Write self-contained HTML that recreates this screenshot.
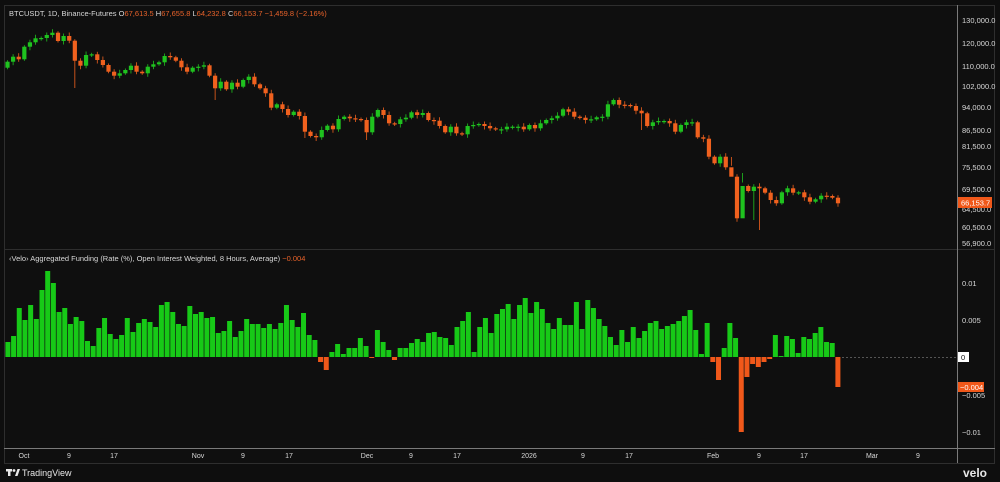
<!DOCTYPE html>
<html><head><meta charset="utf-8">
<style>
html,body{margin:0;padding:0;background:#0e0e0e;}
body{width:1000px;height:482px;overflow:hidden;position:relative;font-family:"Liberation Sans",sans-serif;}
svg{position:absolute;left:0;top:0;}
</style></head><body>
<svg id="s" width="1000" height="482" xmlns="http://www.w3.org/2000/svg">
<rect width="1000" height="482" fill="#0e0e0e"/>
<rect x="4.5" y="5.5" width="990" height="458" fill="#0f0f0f" stroke="#2e2e2e"/>
<line x1="4" y1="249.5" x2="995" y2="249.5" stroke="#2e2e2e"/>
<line x1="957.5" y1="5" x2="957.5" y2="463" stroke="#7a7a7a"/>
<line x1="4" y1="448.5" x2="995" y2="448.5" stroke="#7a7a7a"/>
<line x1="838" y1="357.5" x2="957" y2="357.5" stroke="#555" stroke-dasharray="2,2"/>
<g id="candles"></g>
<g id="fund"></g>
<text x="9" y="16" font-size="7.5" fill="#d8d8d8">BTCUSDT, 1D, Binance-Futures <tspan fill="#d8d8d8">O</tspan><tspan fill="#e8622a">67,613.5</tspan> <tspan fill="#d8d8d8">H</tspan><tspan fill="#e8622a">67,655.8</tspan> <tspan fill="#d8d8d8">L</tspan><tspan fill="#e8622a">64,232.8</tspan> <tspan fill="#d8d8d8">C</tspan><tspan fill="#e8622a">66,153.7  −1,459.8 (−2.16%)</tspan></text>
<text x="9" y="261" font-size="7.5" fill="#d8d8d8">‹Velo› Aggregated Funding (Rate (%), Open Interest Weighted, 8 Hours, Average) <tspan fill="#e8622a"> −0.004</tspan></text>
<g font-size="7.5" fill="#d8d8d8">
<text x="962" y="23">130,000.0</text>
<text x="962" y="46">120,000.0</text>
<text x="962" y="69">110,000.0</text>
<text x="962" y="89">102,000.0</text>
<text x="962" y="110">94,000.0</text>
<text x="962" y="133">86,500.0</text>
<text x="962" y="149">81,500.0</text>
<text x="962" y="170">75,500.0</text>
<text x="962" y="192">69,500.0</text>
<text x="962" y="212">64,500.0</text>
<text x="962" y="230">60,500.0</text>
<text x="962" y="246">56,900.0</text>
<text x="962" y="286">0.01</text>
<text x="962" y="323">0.005</text>
<text x="962" y="398">−0.005</text>
<text x="962" y="435">−0.01</text>
</g>
<rect x="958" y="197" width="34" height="11" fill="#f0581a"/>
<text x="961" y="205.5" font-size="7.5" fill="#fff">66,153.7</text>
<rect x="958" y="352" width="11" height="10" fill="#fff"/>
<text x="961" y="360" font-size="7.5" fill="#111">0</text>
<rect x="958" y="382" width="26" height="10" fill="#f0581a"/>
<text x="960" y="390" font-size="7.5" fill="#fff">−0.004</text>
<g font-size="7" fill="#d8d8d8" text-anchor="middle">
<text x="24" y="458">Oct</text><text x="69" y="458">9</text><text x="114" y="458">17</text>
<text x="198" y="458">Nov</text><text x="243" y="458">9</text><text x="289" y="458">17</text>
<text x="367" y="458">Dec</text><text x="411" y="458">9</text><text x="457" y="458">17</text>
<text x="529" y="458">2026</text><text x="583" y="458">9</text><text x="629" y="458">17</text>
<text x="713" y="458">Feb</text><text x="759" y="458">9</text><text x="804" y="458">17</text>
<text x="872" y="458">Mar</text><text x="918" y="458">9</text>
</g>
<g fill="#e8e8e8">
<rect x="6" y="469" width="6" height="2.5"/><rect x="8" y="469" width="2.5" height="7"/>
<circle cx="14" cy="470.5" r="1.4"/><path d="M15 476 L17.5 469 L20 469 L17.5 476Z"/>
</g>
<text x="22" y="476" font-size="9" fill="#e8e8e8">TradingView</text>
<text x="963" y="477" font-size="12" font-weight="bold" fill="#e8e8e8">velo</text>
</svg>
<script>
(function(){
var closes=[61.7,56.7,59.3,46.7,42.3,38.3,38,35,32.7,41,36,40.7,60.7,65.7,55,54.3,60,65,71.7,75.7,73.3,70,65.7,71.7,73.3,66.7,64.3,62.3,56,57.3,60.7,67.3,71.7,67.7,66.7,65.3,75.7,88.3,81.7,89.3,82.7,86.7,80,76.7,84.3,88.3,93.3,107.7,104.3,109,115,
111.7,116,131.7,136,137.3,130,125.7,129.3,119,116.7,118.3,119,120,132.3,116.7,110,115,123.3,124,119.3,117.7,112.3,115,113,120,120.7,126,132.3,126.7,133.3,134.3,126,125,124,126,128.3,129.3,129.3,126.7,126.7,126.7,129.3,125,128.3,123.3,120,118.3,115.7,109.3,111.7,
116.7,117.7,120,119.3,117.3,116.7,104.3,100,104.7,105,106,110.7,113.3,126,122.3,121,121,123.3,131.7,125,122.3,122.3,137.3,138.7,156.7,163.3,156.7,167.3,176.7,218.3,186,191,186.7,188.3,192.7,200,203.3,192.3,188.3,192.7,192.3,197.3,201.7,199.3,195.7,196,197.7,203.3];
var lows={12:88,37:100,53:138,55:141,64:140,113:130,129:157,134:230,133:220,131:173};
var n=closes.length,x0=7.5,x1=838,p=(x1-x0)/(n-1),h='';
var prev=67.7;
for(var i=0;i<n;i++){var o=prev,c=closes[i];var cx=x0+p*i;var up=c<=o;var col=up?'#1fc21f':'#f0611e';
var bt=Math.min(o,c),bb=Math.max(o,c);if(bb-bt<1.2){bb=bt+1.2;}
var hi=bt-1.5-((i*7)%3),lo=bb+1.5+((i*5)%3);if(lows[i])lo=lows[i];
h+='<line x1="'+cx+'" x2="'+cx+'" y1="'+hi+'" y2="'+lo+'" stroke="'+col+'" stroke-width="0.8"/>';
h+='<rect x="'+(cx-2.1)+'" y="'+bt+'" width="4.2" height="'+(bb-bt)+'" fill="'+col+'"/>';prev=c;}
document.getElementById('candles').innerHTML=h;
var f=[15,21,49,37,52,38,67,86,74,45,49,33,40,36,16,11,29,39,23,18,22,39,25,34,38,35,30,52,55,45,33,31,51,43,45,39,40,24,26,36,20,26,38,33,33,29,33,28,34,52,37,30,
44,22,17,-5,-13,5,13,3,9,9,19,11,-1,27,15,7,-3,9,9,14,18,15,24,25,20,19,12,30,36,45,5,30,39,24,43,48,53,38,52,59,44,55,48,34,28,39,32,32,55,28,
57,49,38,31,20,12,27,15,30,19,26,34,36,28,31,33,36,41,47,27,3,34,-5,-23,9,34,19,-75,-20,-7,-10,-5,-2,22,1,21,18,4,20,18,24,30,15,14,-30];
var m=f.length,fp=(838-8)/(m-1),g='',z=357;
for(var j=0;j<m;j++){var v=f[j],fx=8+fp*j-2.6;var col2=v>=0?'#17c917':'#f0581a';
var y=v>=0?z-v:z,hh=Math.max(Math.abs(v),1);
g+='<rect x="'+fx+'" y="'+y+'" width="5" height="'+hh+'" fill="'+col2+'"/>';}
document.getElementById('fund').innerHTML=g;
})();
</script>
</body></html>
